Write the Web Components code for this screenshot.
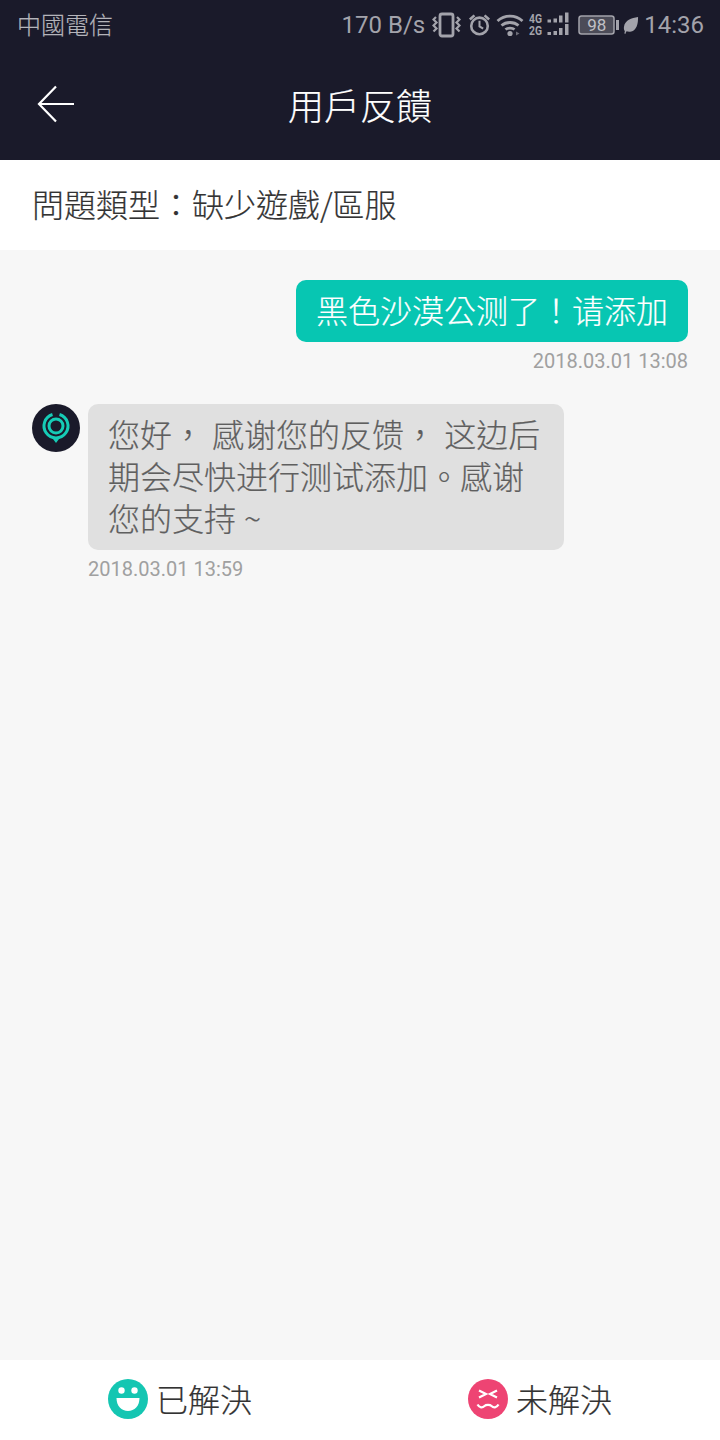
<!DOCTYPE html>
<html lang="zh-Hant">
<head>
<meta charset="utf-8">
<style>
  html, body { margin: 0; padding: 0; }
  body { width: 720px; height: 1440px; overflow: hidden; font-family: "Noto Sans CJK TC", "Noto Sans", sans-serif; font-weight: 300; -webkit-text-stroke: 0.2px currentColor; }
</style>
</head>
<body>
<feedback-page>
  <status-bar slot="top" carrier="中國電信" speed="170 B/s" battery="98" time="14:36"></status-bar>
  <nav-bar slot="top" heading="用戶反饋"></nav-bar>
  <subject-row slot="top">問題類型：缺少遊戲/區服</subject-row>
  <chat-message side="me" time="2018.03.01 13:08">黑色沙漠公测了！请添加</chat-message>
  <chat-message side="them" time="2018.03.01 13:59">您好， 感谢您的反馈， 这边后期会尽快进行测试添加。感谢您的支持 ~</chat-message>
  <resolve-bar slot="bottom"></resolve-bar>
</feedback-page>
<script>
class FeedbackPage extends HTMLElement {
  constructor() {
    super();
    this.attachShadow({ mode: 'open' });
    this.shadowRoot.innerHTML = `
      <style>
        :host { display: flex; flex-direction: column; width: 720px; height: 1440px; background: #f7f7f7; }
        .thread { flex: 1; display: flex; flex-direction: column; gap: 32px; padding: 30px 32px 0; min-height: 0; }
      </style>
      <slot name="top"></slot>
      <div class="thread"><slot></slot></div>
      <slot name="bottom"></slot>
    `;
  }
}

class StatusBar extends HTMLElement {
  connectedCallback() {
    this.attachShadow({ mode: 'open' });
    this.shadowRoot.innerHTML = `
      <style>
        :host { display: flex; align-items: center; justify-content: space-between; height: 52px; padding: 0 16px 2px 17px; box-sizing: border-box; background: #1a1a2a; color: #a3a3ab; }
        .carrier { font-size: 24px; line-height: 24px; margin-top: -3px; color: #b4b4ba; }
        .right { display: flex; align-items: center; -webkit-text-stroke: 0; }
        .speed, .time { font-family: Roboto, sans-serif; font-weight: 400; font-size: 24px; }
        .time { margin-left: 5px; }
        svg { display: block; flex: none; }
        .bat { position: relative; display: flex; margin-left: 9px; }
        .bat span { position: absolute; left: 2px; top: 1px; width: 33px; height: 17px; font: 400 17px/18px Roboto, sans-serif; text-align: center; color: #c0c0c6; }
      </style>
      <div class="carrier">${this.getAttribute('carrier')}</div>
      <div class="right">
        <span class="speed">${this.getAttribute('speed')}</span>
        <svg style="margin-left:7px" width="29" height="26" viewBox="0 0 29 26" fill="none" stroke="#a3a3ab" stroke-width="2.200">
          <rect x="8" y="2" width="13" height="22" rx="2" stroke-width="2.800"/>
          <path d="M4 5l-2.500 2.500 3 3-3 3 3 3-3 3M25 5l2.500 2.500-3 3 3 3-3 3 3 3"/>
        </svg>
        <svg style="margin-left:7px" width="23" height="24" viewBox="0 0 25 26" fill="none" stroke="#a3a3ab" stroke-width="2.800">
          <circle cx="12.500" cy="14" r="9"/>
          <path d="M12.500 8.500v6l4 2.500" stroke-width="2.200"/>
          <path d="M2 7l5-4.500M23 7l-5-4.500"/>
        </svg>
        <svg style="margin-left:5px" width="28" height="26" viewBox="0 0 28 26" fill="none" stroke="#a3a3ab" stroke-width="2.800">
          <path d="M1.500 9c7-6.500 18-6.500 25 0M5.500 13.500c4.500-4 12.500-4 17 0M9.500 17.500c2-1.800 7-1.800 9 0"/>
          <circle cx="14" cy="21.500" r="2.600" fill="#a3a3ab" stroke="none"/>
          <path d="M20 19.500l3.500 2-3.500 2z" fill="#6d6d78" stroke="none"/>
        </svg>
        <svg style="margin-left:5px" width="40" height="26" viewBox="0 0 40 26" fill="#a3a3ab">
          <text x="0" y="10.500" font-family="Roboto, sans-serif" font-size="13" font-weight="700" textLength="13" lengthAdjust="spacingAndGlyphs">4G</text>
          <text x="0" y="23" font-family="Roboto, sans-serif" font-size="13" font-weight="700" textLength="13" lengthAdjust="spacingAndGlyphs">2G</text>
          <rect x="18.500" y="7.500" width="3.500" height="3"/><rect x="24.500" y="6.500" width="3.500" height="4"/><rect x="30" y="3.500" width="3.500" height="7"/><rect x="36" y="0.500" width="3.500" height="10"/>
          <rect x="18.500" y="20" width="3.500" height="3"/><rect x="24.500" y="19" width="3.500" height="4"/><rect x="30" y="16" width="3.500" height="7"/><rect x="36" y="12" width="3.500" height="11"/>
        </svg>
        <div class="bat">
          <svg width="41" height="20" viewBox="0 0 41 20" fill="none">
            <rect x="1" y="1" width="35" height="18" rx="2.500" fill="#4c4c58" stroke="#a3a3ab" stroke-width="1.500"/>
            <rect x="38" y="5" width="3" height="10" fill="#a3a3ab"/>
          </svg>
          <span>${this.getAttribute('battery')}</span>
        </div>
        <svg style="margin-left:4px" width="16" height="20" viewBox="0 0 17 20">
          <path d="M16 1.500C9 2.500 2 5 1 12c-.3 2 .3 3.500 1 4.500C1.800 17.500 1.500 18.500 1.500 19l1 .5c.3-1 .7-2 1.300-2.800C7 18 12 17 14.500 11.500 15.800 8.500 16 5 16 1.500z" fill="#a3a3ab"/>
        </svg>
        <span class="time">${this.getAttribute('time')}</span>
      </div>
    `;
  }
}

class NavBar extends HTMLElement {
  connectedCallback() {
    this.attachShadow({ mode: 'open' });
    this.shadowRoot.innerHTML = `
      <style>
        :host { display: flex; align-items: center; justify-content: center; position: relative; height: 108px; background: #1a1a2a; color: #fff; }
        h1 { margin: 0; font-size: 36px; font-weight: 300; line-height: 104px; height: 108px; }
        svg { position: absolute; left: 37px; top: 33px; }
      </style>
      <svg width="38" height="38" viewBox="0 0 38 38" fill="none" stroke="#fff" stroke-width="2.200">
        <path d="M37 19H2M19 1.500L2 19l17 17.500"/>
      </svg>
      <h1>${this.getAttribute('heading')}</h1>
    `;
  }
}

class SubjectRow extends HTMLElement {
  constructor() {
    super();
    this.attachShadow({ mode: 'open' });
    this.shadowRoot.innerHTML = `
      <style>
        :host { display: block; height: 90px; line-height: 87px; padding-left: 32px; background: #fff; color: #333; font-size: 32px; }
      </style>
      <slot></slot>
    `;
  }
}

class ChatMessage extends HTMLElement {
  connectedCallback() {
    const me = this.getAttribute('side') === 'me';
    this.attachShadow({ mode: 'open' });
    this.shadowRoot.innerHTML = `
      <style>
        :host { display: flex; gap: 8px; justify-content: ${me ? 'flex-end' : 'flex-start'}; }
        .avatar { flex: none; width: 48px; height: 48px; }
        .col { display: flex; flex-direction: column; align-items: ${me ? 'flex-end' : 'flex-start'}; }
        .bubble {
          box-sizing: border-box; border-radius: 10px; font-size: 32px; line-height: 42px; padding: 8px 20px 12px; word-spacing: 1px;
          ${me ? 'background: #07c6b2; color: #fff;' : 'width: 476px; background: #e0e0e0; color: #5f5f5f;'}
        }
        .time { margin-top: 8px; font: 400 20px/22px Roboto, sans-serif; color: #a0a0a0; -webkit-text-stroke: 0; }
      </style>
      ${me ? '' : `<svg class="avatar" viewBox="0 0 48 48">
        <circle cx="24" cy="24" r="24" fill="#1a1a2a"/>
        <path d="M20.500 10.500a12 12 0 1 0 7 0" fill="none" stroke="#16ccb6" stroke-width="3"/>
        <circle cx="24" cy="22" r="7" fill="none" stroke="#16ccb6" stroke-width="3"/>
        <path d="M19.500 33h9L24 39z" fill="#16ccb6"/>
      </svg>`}
      <div class="col">
        <div class="bubble"><slot></slot></div>
        <div class="time">${this.getAttribute('time')}</div>
      </div>
    `;
  }
}

class ResolveBar extends HTMLElement {
  constructor() {
    super();
    this.attachShadow({ mode: 'open' });
    this.shadowRoot.innerHTML = `
      <style>
        :host { display: grid; grid-template-columns: 1fr 1fr; height: 80px; background: #fff; color: #333; font-size: 32px; }
        .opt { display: flex; align-items: center; justify-content: center; gap: 8px; padding-bottom: 2px; }
        span { line-height: 40px; margin-top: -3px; }
        svg { flex: none; }
      </style>
      <div class="opt">
        <svg width="40" height="40" viewBox="0 0 40 40">
          <circle cx="20" cy="20" r="20" fill="#14c6b2"/>
          <circle cx="13.500" cy="11.500" r="3.200" fill="#fff"/>
          <circle cx="26.500" cy="11.500" r="3.200" fill="#fff"/>
          <path d="M8.500 19h23c0 8-5 13-11.500 13S8.500 27 8.500 19z" fill="#fff"/>
        </svg>
        <span>已解決</span>
      </div>
      <div class="opt">
        <svg width="40" height="40" viewBox="0 0 40 40" fill="none" stroke="#fff" stroke-width="2.200">
          <circle cx="20" cy="20" r="20" fill="#ee4473" stroke="none"/>
          <path d="M11 11.500l7 3.500-7 3.500M29 11.500l-7 3.500 7 3.500"/>
          <path d="M9.500 25.500c2 3.500 5 3.500 7 1.500 1.500-1.500 5.500-1.500 7 0 2 2 5 2 7-1.500"/>
        </svg>
        <span>未解決</span>
      </div>
    `;
  }
}

customElements.define('feedback-page', FeedbackPage);
customElements.define('status-bar', StatusBar);
customElements.define('nav-bar', NavBar);
customElements.define('subject-row', SubjectRow);
customElements.define('chat-message', ChatMessage);
customElements.define('resolve-bar', ResolveBar);
</script>
</body>
</html>
